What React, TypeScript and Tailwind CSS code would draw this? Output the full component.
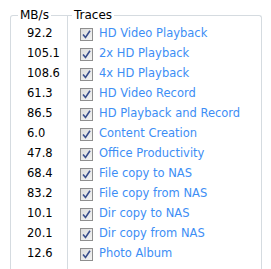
import React from "react";

const traces = [
  { mbs: "92.2", name: "HD Video Playback" },
  { mbs: "105.1", name: "2x HD Playback" },
  { mbs: "108.6", name: "4x HD Playback" },
  { mbs: "61.3", name: "HD Video Record" },
  { mbs: "86.5", name: "HD Playback and Record" },
  { mbs: "6.0", name: "Content Creation" },
  { mbs: "47.8", name: "Office Productivity" },
  { mbs: "68.4", name: "File copy to NAS" },
  { mbs: "83.2", name: "File copy from NAS" },
  { mbs: "10.1", name: "Dir copy to NAS" },
  { mbs: "20.1", name: "Dir copy from NAS" },
  { mbs: "12.6", name: "Photo Album" },
];

function Check() {
  return (
    <span className="w-[13px] h-[13px] border border-[#8f8f8f] bg-gradient-to-br from-[#dcdcdc] to-[#f4f4f4] flex items-center justify-center shrink-0">
      <svg width="9" height="9" viewBox="0 0 9 9">
        <path d="M1 4.5 L3.5 7.5 L8 0.8" fill="none" stroke="#3a4f8c" strokeWidth="1.6" />
      </svg>
    </span>
  );
}

export default function App() {
  return (
    <div
      className="w-[271px] h-[269px] bg-white flex pl-[10px] pr-[9px] pt-[6px]"
      style={{ fontFamily: "Tahoma, 'DejaVu Sans', Verdana, sans-serif" }}
    >
      <fieldset className="w-[58px] border-l border-t border-r border-[#d5dbe0] rounded-tl-[3px] m-0 p-0 pl-[6px]">
        <legend className="px-[2px] ml-[1px] text-[12px] text-black">MB/s</legend>
        <div className="flex flex-col pl-[10px]">
          {traces.map((t) => (
            <div key={t.name} className="h-[20px] flex items-center text-black text-[11.5px]">
              {t.mbs}
            </div>
          ))}
        </div>
      </fieldset>
      <fieldset className="flex-1 border-t border-r border-[#d5dbe0] rounded-tr-[3px] m-0 p-0 pl-[4px]">
        <legend className="px-[2px] text-[12px] text-black">Traces</legend>
        <div className="flex flex-col pl-[8px]">
          {traces.map((t) => (
            <div key={t.name} className="h-[20px] flex items-center gap-[6px] text-[#3d8ef5] text-[11.5px] whitespace-nowrap">
              <Check />
              <span>{t.name}</span>
            </div>
          ))}
        </div>
      </fieldset>
    </div>
  );
}
